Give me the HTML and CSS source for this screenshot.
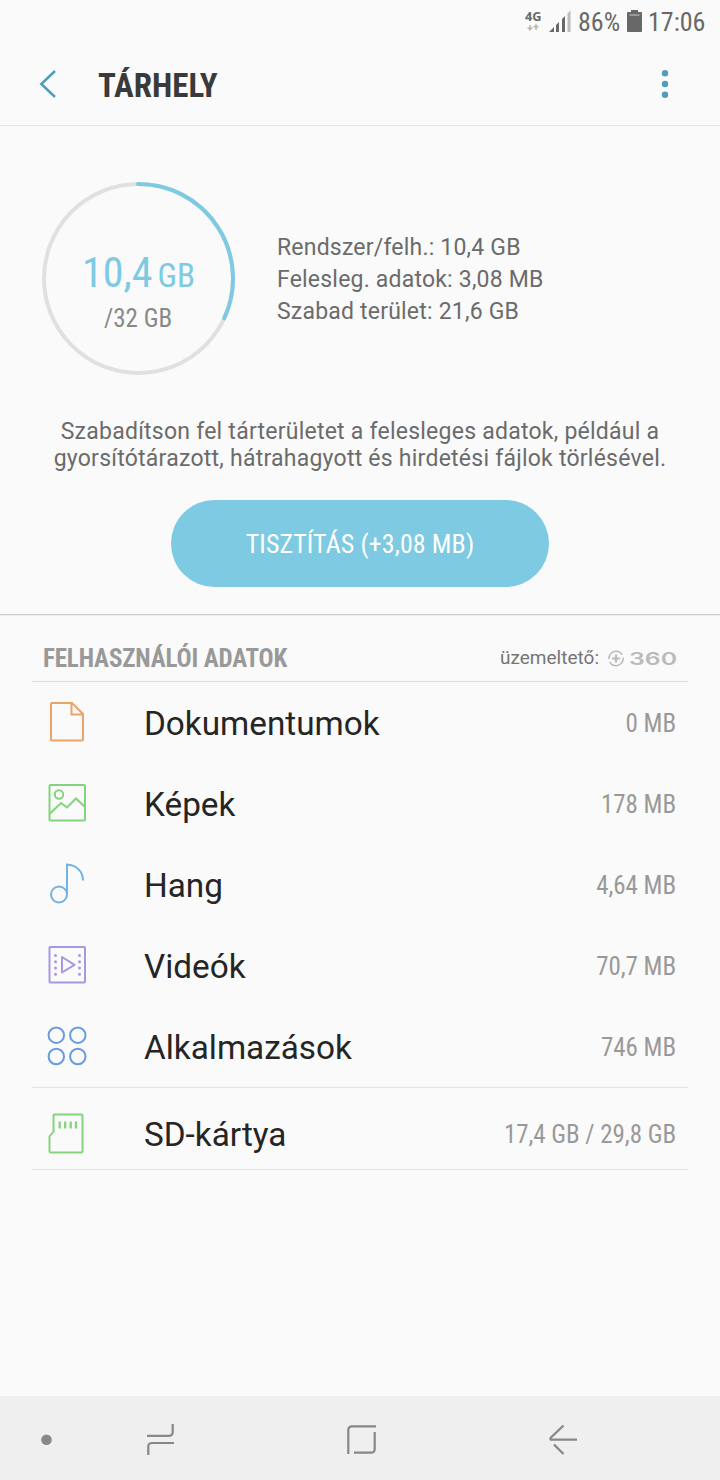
FILE: index.html
```html
<!DOCTYPE html>
<html lang="hu">
<head>
<meta charset="utf-8">
<title>Tárhely</title>
<link rel="stylesheet" href="styles.css">
</head>
<body>
<div class="status">
  <svg class="net" width="18" height="24" viewBox="0 0 18 24"><text class="net-label" x="0" y="11.500" textLength="16.500" lengthAdjust="spacingAndGlyphs">4G</text><path d="M5 16v5M11 21v-5" stroke="#b8b8b8" stroke-width="1.600"/><path d="M1.800 18.500h6.400L5 22zM7.800 18.500h6.400L11 15z" fill="#b8b8b8"/></svg>
  <svg class="signal" width="22" height="22" viewBox="0 0 22 22"><path d="M0 22L5 17V22Z M7 22V15L10 12V22Z M13 22V9L16 6V22Z" fill="#686868"/><path d="M18.500 22V3.500L21.500 0.500V22Z" fill="#bcbcbc"/></svg>
  <span class="battery-text cond">86%</span>
  <svg class="battery" width="15" height="22" viewBox="0 0 15 22"><path d="M4 0h7v2h3q1 0 1 1v18q0 1-1 1H1q-1 0-1-1V3q0-1 1-1h3z" fill="#686868"/><path d="M2.500 5h10" stroke="#aaa" stroke-width="1.500"/></svg>
  <span class="clock cond">17:06</span>
</div>
<header class="header">
  <svg class="back" width="18" height="30" viewBox="0 0 18 30"><path d="M16 2L2.300 15L16 28" fill="none" stroke="#4f9dbb" stroke-width="2.500"/></svg>
  <h1 class="title cond">TÁRHELY</h1>
  <svg class="more" width="8" height="30" viewBox="0 0 8 30"><g fill="#4f9dbb"><circle cx="4" cy="4.300" r="3.200"/><circle cx="4" cy="15" r="3.200"/><circle cx="4" cy="25.700" r="3.200"/></g></svg>
</header>
<section class="overview">
  <div class="summary">
    <div class="gauge">
      <svg class="ring" width="194" height="194" viewBox="0 0 194 194"><circle cx="97.500" cy="96.500" r="94.500" fill="none" stroke="#e0e0e0" stroke-width="4"/><path d="M97 2H97.500A94.500 94.500 0 0 1 183.200 136.300" fill="none" stroke="#7ecae2" stroke-width="4" stroke-linecap="round"/></svg>
      <div class="used cond"><span class="used-num">10,4</span><span class="used-unit">GB</span></div>
      <div class="total cond">/32 GB</div>
    </div>
    <div class="facts"><div>Rendszer/felh.: 10,4 GB</div><div>Felesleg. adatok: 3,08 MB</div><div>Szabad terület: 21,6 GB</div></div>
  </div>
  <p class="hint">Szabadítson fel tárterületet a felesleges adatok, például a<br>gyorsítótárazott, hátrahagyott és hirdetési fájlok törlésével.</p>
  <button class="clean cond">TISZTÍTÁS (+3,08 MB)</button>
</section>
<main class="data">
  <div class="data-head">
    <h2 class="section-title cond">FELHASZNÁLÓI ADATOK</h2>
    <span class="powered">üzemeltető:</span>
    <svg class="brand" width="69" height="18" viewBox="0 0 69 18"><circle cx="9" cy="9.500" r="7.200" fill="none" stroke="#bbb" stroke-width="1.500" stroke-dasharray="19 3"/><path d="M9 5.500v8M5 9.500h8" stroke="#bbb" stroke-width="2.200"/><text class="brand-text" x="22" y="15.500" textLength="48" lengthAdjust="spacingAndGlyphs">360</text></svg>
  </div>
  <div class="row">
    <svg class="icon" width="40" height="42" viewBox="0 0 40 42"><path d="M4 2H25L36 13V38.500Q36 39.500 35 39.500H5Q4 39.500 4 38.500V3Q4 2 5 2M24.500 2V13.500H36" fill="none" stroke="#eba468" stroke-width="2"/></svg>
    <span class="name">Dokumentumok</span><span class="size cond">0 MB</span>
  </div>
  <div class="row">
    <svg class="icon" width="40" height="42" viewBox="0 0 40 42"><g fill="none" stroke="#85d27f" stroke-width="2"><rect x="2.500" y="3" width="35.500" height="35.500" rx="1"/><circle cx="12" cy="12.500" r="4.200"/><path d="M2.500 32L14 21L20 25.500L29 16.500L38 25"/></g></svg>
    <span class="name">Képek</span><span class="size cond">178 MB</span>
  </div>
  <div class="row">
    <svg class="icon" width="40" height="42" viewBox="0 0 40 42"><g fill="none" stroke="#74b2e2" stroke-width="2"><circle cx="12" cy="31.500" r="8"/><path d="M20 31.500V1.500C29 2 36 8 36 17.500"/></g></svg>
    <span class="name">Hang</span><span class="size cond">4,64 MB</span>
  </div>
  <div class="row">
    <svg class="icon" width="40" height="42" viewBox="0 0 40 42"><g fill="none" stroke="#a798df" stroke-width="2"><rect x="2.500" y="3" width="35.500" height="35.500" rx="1"/><path d="M15 13V28.500L27.500 20.800Z" stroke-linejoin="round"/><path d="M8.500 11.500V31M32.500 11.500V31" stroke-width="3" stroke-linecap="round" stroke-dasharray="0.010 6.200"/></g></svg>
    <span class="name">Videók</span><span class="size cond">70,7 MB</span>
  </div>
  <div class="row">
    <svg class="icon" width="40" height="42" viewBox="0 0 40 42"><g fill="none" stroke="#669be0" stroke-width="2"><circle cx="9.300" cy="10.200" r="7.700"/><circle cx="30.800" cy="10.200" r="7.700"/><circle cx="9.300" cy="31.500" r="7.700"/><circle cx="30.800" cy="31.500" r="7.700"/></g></svg>
    <span class="name">Alkalmazások</span><span class="size cond">746 MB</span>
  </div>
  <div class="row card">
    <svg class="icon" width="40" height="42" viewBox="0 0 40 42"><g fill="none" stroke="#85d27f" stroke-width="2"><path d="M7.500 1.500H34Q35.500 1.500 35.500 3V38Q35.500 39.500 34 39.500H4Q2.500 39.500 2.500 38V23.500L6.500 18.500V2.500Q6.500 1.500 7.500 1.500Z"/><path d="M12.700 8.500V15.500M18.200 8.500V15.500M23.700 8.500V15.500M29 8.500V15.500" stroke-width="2.300"/></g></svg>
    <span class="name">SD-kártya</span><span class="size cond">17,4 GB / 29,8 GB</span>
  </div>
</main>
<nav class="nav">
  <svg class="n-dot" width="12" height="12" viewBox="0 0 12 12"><circle cx="6.500" cy="5.700" r="5.300" fill="#888"/></svg>
  <svg class="n-recents" width="28" height="32" viewBox="0 0 28 32"><path d="M0 11.800H22Q25.700 11.800 25.700 8V0M27 19H5Q1.300 19 1.300 22.500V31" fill="none" stroke="#888" stroke-width="2.200"/></svg>
  <svg class="n-home" width="30" height="30" viewBox="0 0 30 30"><path d="M1.300 29V5Q1.300 1.300 5 1.300H29M27.700 7V24Q27.700 27.700 24 27.700H7" fill="none" stroke="#888" stroke-width="2.200"/></svg>
  <svg class="n-back" width="29" height="32" viewBox="0 0 29 32"><path d="M14.500 1.500L2 13.500Q0.500 15.700 3 15.700H28M5 20.500L14.500 30" fill="none" stroke="#888" stroke-width="2.300"/></svg>
</nav>
</body>
</html>
```
FILE: styles.css
```css
* { box-sizing: border-box; }
body { margin: 0; width: 720px; height: 1480px; display: flex; flex-direction: column; background: #fafafa; font-family: Roboto, "Liberation Sans", sans-serif; overflow: hidden; }
svg { display: block; flex: none; }
h1, h2, p { margin: 0; }
.cond { font-family: "Roboto Condensed", Roboto, sans-serif; font-stretch: 75%; white-space: nowrap; }
.status { height: 44px; display: flex; padding-left: 525px; color: #686868; font-size: 26px; line-height: 44px; }
.net { margin-top: 9px; }
.net-label { font: bold 12px "Open Sans", sans-serif; fill: #686868; }
.signal { margin: 10px 0 0 6px; }
.battery-text { width: 43px; margin-left: 7px; }
.battery { margin: 10px 0 0 6px; }
.clock { margin-left: 6px; }
.header { height: 82px; display: flex; border-bottom: 1px solid #e4e4e4; }
.back { margin: 25px 0 0 39px; }
.title { margin: 20px 0 0 41px; font-size: 33px; line-height: 44px; font-weight: 700; color: #3a3a3a; }
.more { margin: 25px 51px 0 auto; }
.overview { height: 489px; display: flex; flex-direction: column; align-items: center; border-bottom: 1px solid #cfcfcf; box-shadow: 0 1px 1px #ededed; }
.summary { width: 720px; display: flex; padding: 56px 0 0 41px; }
.gauge { width: 194px; height: 194px; display: grid; grid-template-rows: 118px 36px; grid-template-columns: 194px; align-content: start; }
.ring { grid-area: 1 / 1 / 3 / 2; overflow: visible; }
.used { grid-area: 1 / 1; align-self: end; display: flex; justify-content: center; align-items: baseline; gap: 5px; padding-left: 1px; line-height: 48px; color: #7ecae2; }
.used-num { font-size: 42px; }
.used-unit { font-size: 33px; }
.total { grid-area: 2 / 1; text-align: center; font-size: 25px; line-height: 38px; color: #888; }
.facts { margin: 50px 0 0 42px; font-size: 23px; line-height: 32px; letter-spacing: 0.2px; color: #6b6b6b; }
.hint { margin-top: 42px; font-size: 23px; line-height: 27px; letter-spacing: 0.24px; color: #6b6b6b; text-align: center; white-space: nowrap; }
.clean { width: 378px; height: 87px; margin-top: 28px; padding: 0; border: 0; border-radius: 44px; background: #7ecae2; color: #fff; font-size: 26px; letter-spacing: 0.1px; }
.data { flex: 1; padding: 0 32px; }
.data-head { height: 67px; display: flex; align-items: center; padding: 20px 11px 0; border-bottom: 1px solid #dedede; }
.section-title { padding-top: 1px; font-size: 25px; line-height: 40px; letter-spacing: -0.15px; font-weight: 700; color: #999; }
.powered { margin-left: auto; font-size: 19px; line-height: 24px; color: #757575; }
.brand { margin: 0 1px 0 8px; overflow: visible; }
.brand-text { font: 600 17px Inter, sans-serif; fill: #bbb; }
.row { height: 81px; display: flex; align-items: center; padding: 0 12px 0 15px; }
.icon { margin-top: -1px; }
.name { margin-left: 57px; padding-top: 2px; font-size: 33.3px; line-height: 40px; color: #252525; }
.size { margin-left: auto; padding-top: 2px; font-size: 25px; line-height: 30px; letter-spacing: -0.05px; color: #999; }
.card { height: 83px; padding-top: 11px; border-top: 1px solid #e3e3e3; border-bottom: 1px solid #e3e3e3; }
.nav { height: 84px; display: flex; background: #efefef; padding-left: 40px; }
.n-dot { margin-top: 38px; }
.n-recents { margin: 28px 0 0 95px; }
.n-home { margin: 29px 0 0 172px; }
.n-back { margin: 28px 0 0 172px; }
```
